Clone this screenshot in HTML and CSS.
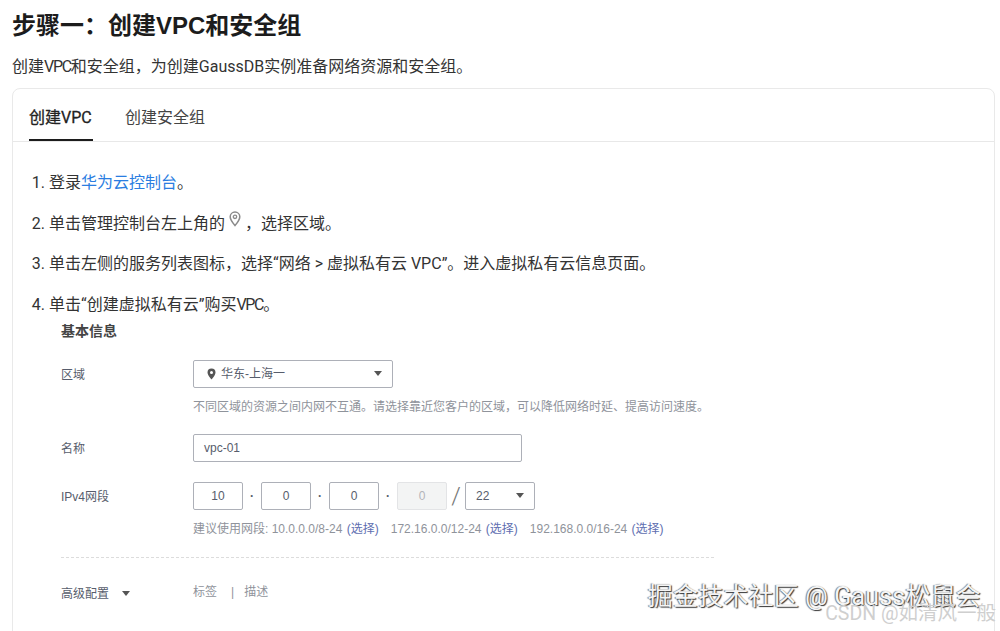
FILE: index.html
```html
<!DOCTYPE html>
<html lang="zh-CN">
<head>
    <meta charset="UTF-8">
    <meta name="viewport" content="width=device-width, initial-scale=1.0">
    <title>步骤一：创建VPC和安全组</title>
    <link rel="stylesheet" href="styles.css">
</head>
<body>
    <h1>步骤一：创建VPC和安全组</h1>
    <p class="intro">创建<span class="tight">VPC</span>和安全组，为创建GaussDB实例准备网络资源和安全组。</p>

    <div class="card">
        <div class="tabs">
            <div class="tab active">创建VPC</div>
            <div class="tab">创建安全组</div>
        </div>

        <ol class="steps">
            <li>登录<a href="#">华为云控制台</a>。</li>
            <li>单击管理控制台左上角的
                <svg class="pin-inline" width="12" height="16" viewBox="0 0 12 16">
                    <path d="M6 1a4.8 4.8 0 0 0-4.8 4.8C1.200 9 6 14.600 6 14.600S10.800 9 10.800 5.800A4.800 4.800 0 0 0 6 1z" fill="none" stroke="#8a8a8a" stroke-width="1.500"/>
                    <circle cx="6" cy="5.800" r="1.700" fill="none" stroke="#8a8a8a" stroke-width="1.300"/>
                </svg>
                ，选择区域。</li>
            <li>单击左侧的服务列表图标，选择“网络 &gt; 虚拟私有云 VPC”。进入虚拟私有云信息页面。</li>
            <li>单击“创建虚拟私有云”购买<span class="tight">VPC</span>。</li>
        </ol>

        <div class="form">
            <div class="form-title">基本信息</div>

            <div class="row row-region">
                <div class="label">区域</div>
                <div>
                    <div class="box select region">
                        <svg width="9" height="12" viewBox="0 0 9 12">
                            <path d="M4.5 0.5A4 4 0 0 0 .5 4.5c0 2.700 4 7 4 7s4-4.300 4-7a4 4 0 0 0-4-4zm0 5.400a1.500 1.500 0 1 1 0-3 1.500 1.500 0 0 1 0 3z" fill="#555" fill-rule="evenodd"/>
                        </svg>
                        <span class="region-name">华东-上海一</span>
                        <span class="caret"></span>
                    </div>
                    <div class="hint">不同区域的资源之间内网不互通。请选择靠近您客户的区域，可以降低网络时延、提高访问速度。</div>
                </div>
            </div>

            <div class="row row-name">
                <div class="label">名称</div>
                <div class="box name-input">vpc-01</div>
            </div>

            <div class="row row-ip">
                <div class="label">IPv4网段</div>
                <div>
                    <div class="ip-line">
                        <div class="box octet">10</div>
                        <span class="dot">·</span>
                        <div class="box octet">0</div>
                        <span class="dot">·</span>
                        <div class="box octet">0</div>
                        <span class="dot">·</span>
                        <div class="box octet disabled">0</div>
                        <span class="slash">/</span>
                        <div class="box select mask">22<span class="caret"></span></div>
                    </div>
                    <div class="hint hint-ip">
                        <span>建议使用网段: 10.0.0.0/8-24 <a href="#">(选择)</a></span>
                        <span>172.16.0.0/12-24 <a href="#">(选择)</a></span>
                        <span>192.168.0.0/16-24 <a href="#">(选择)</a></span>
                    </div>
                </div>
            </div>

            <div class="divider"></div>

            <div class="row row-advanced">
                <div class="label label-advanced">高级配置<span class="caret"></span></div>
                <div class="adv-links">标签<span class="sep">|</span>描述</div>
            </div>
        </div>
    </div>

    <div class="mark-juejin">掘金技术社区 @ Gauss松鼠会</div>
    <div class="mark-csdn">CSDN @如清风一般</div>
</body>
</html>
```

FILE: styles.css
```css
html, body {
    height: 631px;
    overflow: hidden;
}
body {
    position: relative;
    margin: 0;
    padding: 11px 5px 0 12px;
    background-color: #fff;
    color: #252b3a;
    font-family: Roboto, "Noto Sans CJK SC", sans-serif;
}
a {
    color: #2a7de1;
    text-decoration: none;
}
.tight {
    letter-spacing: -1.3px;
}
h1 {
    margin: 0;
    font-family: "Liberation Sans", "Noto Sans CJK SC", sans-serif;
    font-size: 24px;
    line-height: 30px;
    font-weight: 700;
    color: #1c1c1c;
}
.intro {
    margin: 14px 0 0;
    font-size: 16px;
    line-height: 24px;
    color: #333;
}
.card {
    margin-top: 9px;
    height: 560px;
    border: 1px solid #e9e9e9;
    border-radius: 8px;
    background-color: #fff;
}
.tabs {
    display: flex;
    gap: 32px;
    height: 52px;
    padding-left: 16px;
    border-bottom: 1px solid #e8e8e8;
}
.tab {
    height: 52px;
    line-height: 58px;
    font-size: 16px;
    color: #444;
}
.tab.active {
    height: 50px;
    min-width: 64px;
    color: #222;
    -webkit-text-stroke: 0.3px #222;
    border-bottom: 2px solid #1c1c1c;
}
.steps {
    margin: 0;
    padding: 28px 0 0 36px;
    font-size: 16px;
    line-height: 26px;
    color: #333;
}
.steps li {
    margin-bottom: 14.6px;
}
.steps li:last-child {
    margin-bottom: 0;
}
.pin-inline {
    vertical-align: 2px;
}
.form {
    margin-top: 3px;
    padding-left: 48px;
    width: 653px;
    font-family: "Liberation Sans", "Noto Sans CJK SC", sans-serif;
    font-size: 12px;
    color: #575d6c;
}
.form-title {
    font-size: 14px;
    line-height: 20px;
    font-weight: 700;
    color: #444;
}
.row {
    display: grid;
    grid-template-columns: 132px 1fr;
}
.row-region {
    margin-top: 19px;
}
.row-name {
    margin-top: 18px;
}
.row-ip {
    margin-top: 18px;
}
.row-advanced {
    margin-top: 21px;
}
.label {
    line-height: 30px;
}
.box {
    box-sizing: border-box;
    height: 28px;
    line-height: 26px;
    border: 1px solid #adb0b8;
    border-radius: 2px;
    background-color: #fff;
}
.select {
    display: flex;
    align-items: center;
}
.caret {
    display: inline-block;
    width: 0;
    height: 0;
    border-left: 4.5px solid transparent;
    border-right: 4.5px solid transparent;
    border-top: 5px solid #555;
}
.region {
    width: 200px;
    padding: 0 10px 0 13px;
}
.region-name {
    flex: 1;
    margin-left: 5px;
}
.hint {
    margin-top: 10px;
    line-height: 18px;
    font-size: 12px;
    color: #8f939b;
}
.name-input {
    width: 329px;
    padding-left: 10px;
    font-size: 12px;
}
.ip-line {
    display: flex;
    align-items: center;
}
.octet {
    width: 50px;
    text-align: center;
}
.octet.disabled {
    background-color: #f3f4f4;
    border-color: #e3e4e6;
    color: #b3b5ba;
}
.dot {
    width: 18px;
    text-align: center;
    font-weight: 700;
}
.slash {
    width: 18px;
    text-align: center;
    font-family: Roboto, sans-serif;
    font-size: 24px;
    font-weight: 300;
    line-height: 28px;
    color: #777;
}
.mask {
    width: 70px;
    padding: 0 10px;
    justify-content: space-between;
}
.hint-ip {
    display: flex;
    gap: 11px;
}
.hint-ip a, .hint-ip a:visited {
    padding: 0 1px;
    color: #5e6eb0;
}
.divider {
    margin-top: 19px;
    border-top: 1px dashed #dcdcdc;
}
.label-advanced {
    display: flex;
    align-items: center;
    gap: 13px;
}
.adv-links {
    line-height: 26px;
    color: #8f939b;
}
.sep {
    margin: 0 10px 0 14px;
}
/* watermarks over the page */
.mark-juejin {
    position: absolute;
    right: 19px;
    top: 580px;
    font-size: 25px;
    line-height: 34px;
    letter-spacing: 0.18px;
    color: #f4f4f4;
    text-shadow: 1px 1px 1px #333, -1px 0 1px #777;
    white-space: nowrap;
}
.mark-csdn {
    position: absolute;
    right: 4px;
    top: 603px;
    font-size: 19.500px;
    line-height: 22px;
    color: #cfcfcf;
    white-space: nowrap;
}
```
